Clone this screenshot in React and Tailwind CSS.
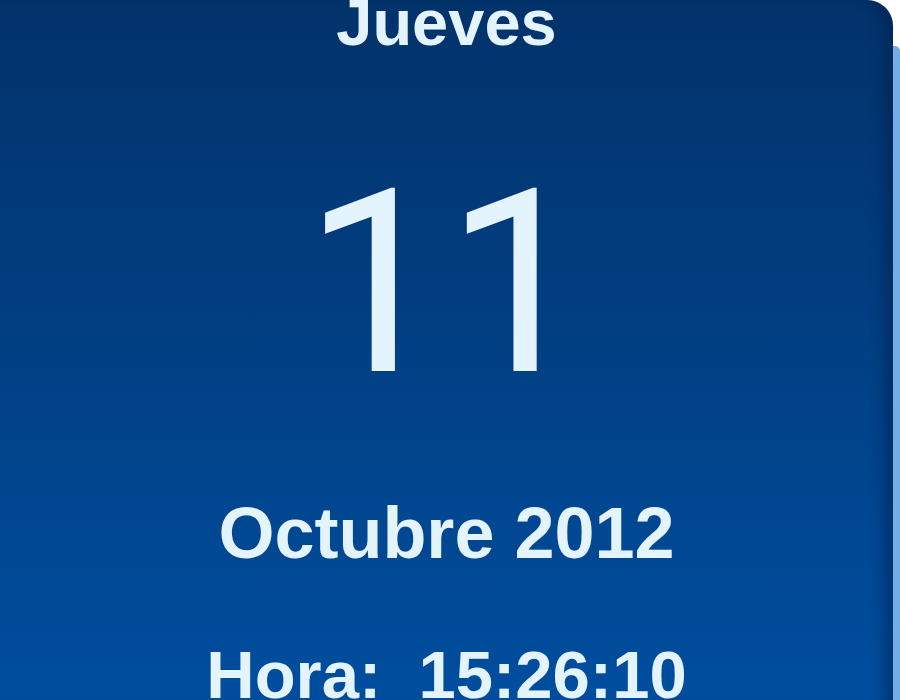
import React from 'react';

export default function App() {
  return (
    <div className="w-[900px] h-[700px] overflow-hidden bg-white flex">
      {/* panel del calendario */}
      <div
        className="w-[893px] h-full rounded-tr-[26px] bg-gradient-to-b from-[#02326a] to-[#004e9f] shadow-[inset_-16px_0_14px_-8px_rgba(0,24,64,0.45)] flex flex-col items-center text-[#e4f4ff]"
        style={{ fontFamily: '"Liberation Sans", Arial, sans-serif' }}
      >
        <div className="mt-[-10px] text-[65px] leading-none font-bold">Jueves</div>
        <div
          className="mt-[101px] text-[256px] leading-none tracking-[-2px] pr-[2px]"
          style={{ fontFamily: 'Roboto, sans-serif' }}
        >
          11
        </div>
        <div className="mt-[85px] text-[72px] leading-none font-bold">Octubre 2012</div>
        <div className="mt-[72px] text-[67px] leading-none font-bold whitespace-pre">Hora:  15:26:10</div>
      </div>
      {/* borde claro derecho */}
      <div className="w-[7px] mt-[46px] rounded-tr-[5px] bg-[#72ade6]" />
    </div>
  );
}
